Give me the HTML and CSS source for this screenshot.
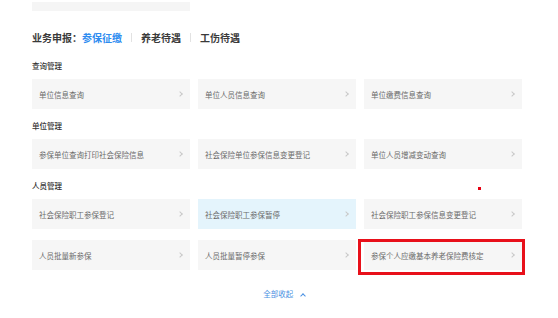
FILE: index.html
```html
<!DOCTYPE html>
<html lang="zh-CN">
<head>
    <meta charset="UTF-8">
    <meta name="viewport" content="width=device-width, initial-scale=1.0">
    <title>业务申报</title>
    <link rel="stylesheet" href="styles.css">
</head>
<body>

<div class="page">
    <div class="search-bar"></div>

    <!-- Tabs -->
    <div class="tabs">
        <span class="tabs-label">业务申报：</span>
        <span class="tab active">参保征缴</span>
        <span class="tab-sep"></span>
        <span class="tab">养老待遇</span>
        <span class="tab-sep"></span>
        <span class="tab">工伤待遇</span>
    </div>

    <div class="section">
        <div class="section-title">查询管理</div>
        <div class="cards">
            <a class="card">单位信息查询<i class="arrow"></i></a>
            <a class="card">单位人员信息查询<i class="arrow"></i></a>
            <a class="card">单位缴费信息查询<i class="arrow"></i></a>
        </div>
    </div>

    <div class="section">
        <div class="section-title">单位管理</div>
        <div class="cards">
            <a class="card">参保单位查询打印社会保险信息<i class="arrow"></i></a>
            <a class="card">社会保险单位参保信息变更登记<i class="arrow"></i></a>
            <a class="card">单位人员增减变动查询<i class="arrow"></i></a>
        </div>
    </div>

    <div class="section">
        <div class="section-title">人员管理</div>
        <div class="cards">
            <a class="card">社会保险职工参保登记<i class="arrow"></i></a>
            <a class="card hover">社会保险职工参保暂停<i class="arrow"></i></a>
            <a class="card">社会保险职工参保信息变更登记<i class="arrow"></i></a>
            <a class="card">人员批量新参保<i class="arrow"></i></a>
            <a class="card">人员批量暂停参保<i class="arrow"></i></a>
            <a class="card marked">参保个人应缴基本养老保险费核定<i class="arrow"></i></a>
        </div>
    </div>

    <div class="collapse">全部收起 <span class="caret"></span></div>

    <!-- annotation dot -->
    <span class="dot"></span>
</div>

</body>
</html>
```

FILE: styles.css
```css
/* Basic Reset */
* {
    box-sizing: border-box;
    margin: 0;
    padding: 0;
}

body {
    background: #fff;
    font-family: "Noto Sans CJK SC", "Noto Sans", sans-serif;
    color: #333;
}

.page {
    position: relative;
    width: 558px;
    height: 318px;
    padding: 2px 36px 0 32px;
}

.search-bar {
    width: 158px;
    height: 9px;
    background: #f5f5f5;
}

/* Tabs */
.tabs {
    display: flex;
    align-items: center;
    height: 20px;
    margin-top: 16px;
    font-size: 10px;
    font-weight: 700;
    color: #3a3a3a;
}

.tab.active {
    color: #2d8cf0;
}

.tab-sep {
    width: 1px;
    height: 9px;
    margin: 0 9px;
    background: #e2e2e2;
}

/* Sections */
.section {
    margin-top: 11px;
}

.section + .section {
    margin-top: 9px;
}

.section-title {
    height: 16px;
    line-height: 16px;
    font-size: 7.5px;
    font-weight: 500;
    color: #333;
    margin-bottom: 5px;
}

.cards {
    display: grid;
    grid-template-columns: repeat(3, 158px);
    column-gap: 8px;
    row-gap: 11px;
}

.card {
    position: relative;
    display: flex;
    align-items: center;
    justify-content: space-between;
    height: 30px;
    padding: 0 8px 0 7px;
    background: #f6f6f6;
    font-size: 7.5px;
    color: #6a6a6a;
}

.card.hover {
    background: #e4f4fc;
}

.arrow {
    width: 4px;
    height: 4px;
    border-top: 1px solid #c8c8c8;
    border-right: 1px solid #c8c8c8;
    transform: rotate(45deg);
}

/* red annotation box */
.card.marked::after {
    content: "";
    position: absolute;
    left: -6px;
    top: -1px;
    width: 161px;
    height: 30px;
    border: 3px solid #e8101a;
}

.collapse {
    margin-top: 16px;
    padding-left: 14px;
    text-align: center;
    width: 490px;
    height: 16px;
    line-height: 16px;
    font-size: 7.5px;
    color: #4a90e2;
}

.caret {
    display: inline-block;
    width: 4px;
    height: 4px;
    margin-left: 6px;
    border-top: 1px solid #4a90e2;
    border-left: 1px solid #4a90e2;
    transform: translateY(1px) rotate(45deg);
}

.dot {
    position: absolute;
    left: 478px;
    top: 187px;
    width: 3px;
    height: 3px;
    background: #e60012;
}
```
